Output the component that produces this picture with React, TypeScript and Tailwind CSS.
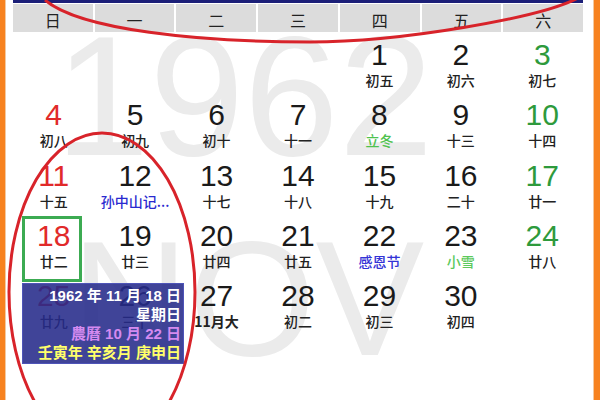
import React from "react";

type Day = { d: number; lunar: string; lc?: string; bold?: boolean };

const lunarMap: Record<number, { t: string; c?: string; b?: boolean }> = {
  1: { t: "初五" }, 2: { t: "初六" }, 3: { t: "初七" }, 4: { t: "初八" }, 5: { t: "初九" },
  6: { t: "初十" }, 7: { t: "十一" }, 8: { t: "立冬", c: "text-[#4fc24f]" }, 9: { t: "十三" },
  10: { t: "十四" }, 11: { t: "十五" }, 12: { t: "孙中山记...", c: "text-[#2a2ad0]" },
  13: { t: "十七" }, 14: { t: "十八" }, 15: { t: "十九" }, 16: { t: "二十" }, 17: { t: "廿一" },
  18: { t: "廿二" }, 19: { t: "廿三" }, 20: { t: "廿四" }, 21: { t: "廿五" },
  22: { t: "感恩节", c: "text-[#3333d6]" }, 23: { t: "小雪", c: "text-[#5cc95c]" },
  24: { t: "廿八" }, 25: { t: "廿九" }, 26: { t: "三十" }, 27: { t: "11月大", b: true },
  28: { t: "初二" }, 29: { t: "初三" }, 30: { t: "初四" },
};

const headers = ["日", "一", "二", "三", "四", "五", "六"];

const cells: (Day | null)[] = [];
for (let i = 0; i < 4; i++) cells.push(null);
for (let d = 1; d <= 30; d++) {
  const m = lunarMap[d];
  cells.push({ d, lunar: m.t, lc: m.c, bold: m.b });
}
while (cells.length < 35) cells.push(null);

const cjk = "font-['Noto_Sans_CJK_SC',sans-serif]";
const arial = "font-['Liberation_Sans','Noto_Sans_CJK_SC',sans-serif]";

export default function App() {
  return (
    <div className="relative w-[600px] h-[400px] overflow-hidden bg-white flex">
      <div className="w-[5px] bg-[#f7821f]" />
      <div className="w-[1px] bg-[#f3c9a0]" />
      <div className="flex-1 pl-[7px] pr-[10px] relative z-10">
        <div className="h-[3px] bg-[#1c1f78]" />
        <div className="grid grid-cols-7 gap-x-[2px] mt-[1px] h-[28px]">
          {headers.map((h) => (
            <div
              key={h}
              className={`bg-[#dcdcdc] flex items-center justify-center pt-[3px] text-[16px] text-[#222] ${cjk}`}
            >
              {h}
            </div>
          ))}
        </div>
        <div className="grid grid-cols-7">
          {cells.map((c, i) => {
            const col = i % 7;
            const numColor =
              col === 0 ? "text-[#e12a2a]" : col === 6 ? "text-[#2e9a3c]" : "text-[#1a1a1a]";
            return (
              <div key={i} className="relative h-[60.3px] flex flex-col items-center pt-[8px]">
                {c && c.d === 18 && (
                  <div className="absolute top-[3px] left-[9px] w-[60px] h-[66px] border-[3px] border-[#3cab52]" />
                )}
                {c && (
                  <>
                    <div className={`text-[30px] leading-[30px] ${arial} ${numColor}`}>{c.d}</div>
                    <div
                      className={`mt-[2px] text-[14px] leading-[16px] whitespace-nowrap ${cjk} ${
                        c.lc ?? "text-[#222]"
                      } ${c.bold ? "font-bold" : "font-medium"}`}
                    >
                      {c.lunar}
                    </div>
                  </>
                )}
              </div>
            );
          })}
        </div>
      </div>
      <div className="w-[1px] bg-[#f3c9a0]" />
      <div className="w-[6px] bg-[#f7821f]" />

      {/* watermark */}
      <div
        className={`absolute left-[55px] top-[11px] text-[170px] leading-none text-[#ebebeb] z-0 ${arial}`}
      >
        1962
      </div>
      <div
        className={`absolute left-[71px] top-[217px] text-[163px] leading-none text-[#ebebeb] z-0 ${arial}`}
      >
        NOV
      </div>

      {/* tooltip */}
      <div
        className={`absolute left-[22px] top-[283px] w-[162px] h-[81px] z-20 bg-[#262a8a]/[0.88] border border-[#4e54b8] pt-[2px] pr-[2px] text-right text-[15px] leading-[19px] font-bold ${arial}`}
      >
        <div className="text-white">1962 年 11 月 18 日</div>
        <div className="text-white">星期日</div>
        <div className="text-[#d48af0]">農曆 10 月 22 日</div>
        <div className="text-[#ffff6a]">壬寅年 辛亥月 庚申日</div>
      </div>

      {/* red annotation ellipses */}
      <svg className="absolute inset-0 z-30 pointer-events-none" width="600" height="400">
        <path
          d="M 45 0 C 80 30, 200 42, 310 42 C 400 42, 540 18, 578 -2"
          fill="none"
          stroke="#d8232a"
          strokeWidth="3"
        />
        <ellipse cx="102" cy="292" rx="93" ry="159" fill="none" stroke="#d8232a" strokeWidth="3" />
      </svg>
    </div>
  );
}
